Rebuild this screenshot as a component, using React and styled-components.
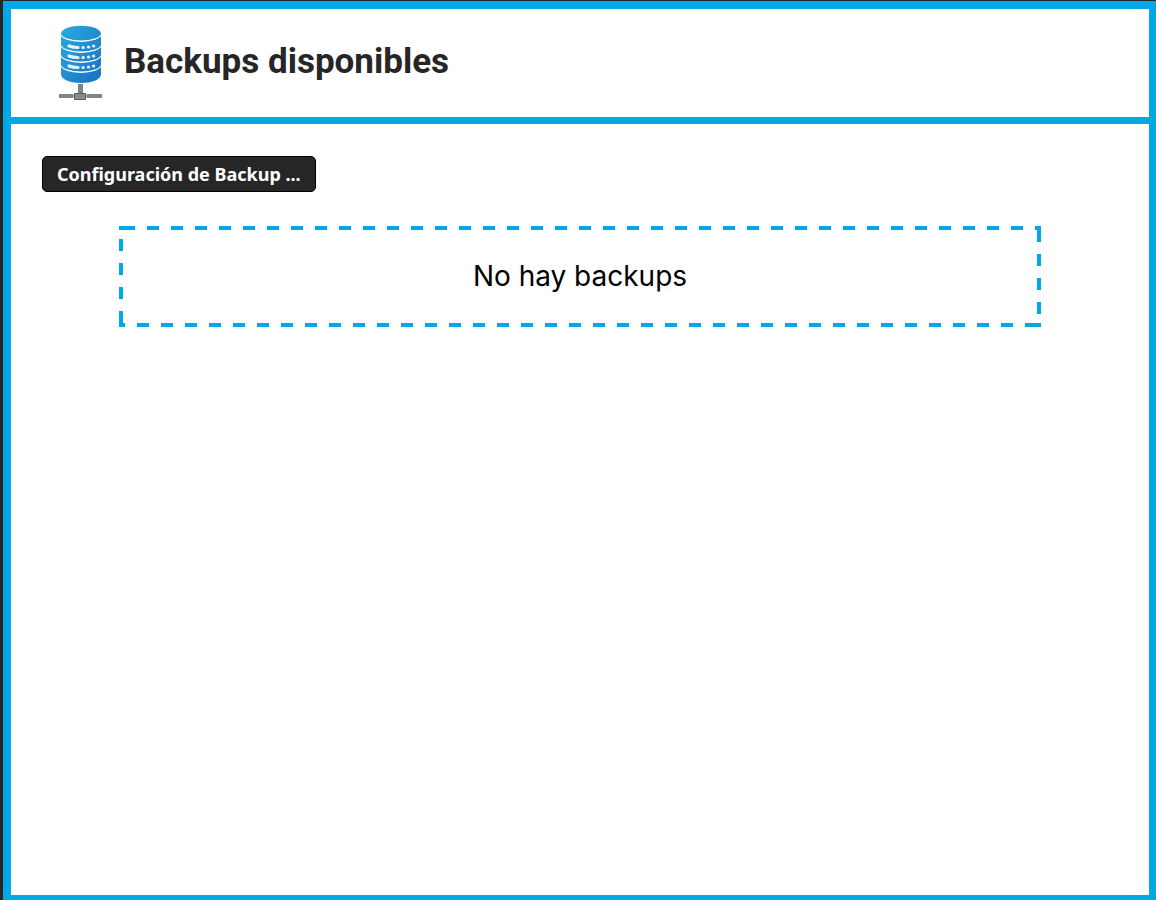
import React from 'react';
import styled, { createGlobalStyle, ThemeProvider } from 'styled-components';

const theme = { accent: '#00a8e6', dark: '#262626' };

const GlobalStyle = createGlobalStyle`
  *, *::before, *::after { box-sizing: border-box; }
  body { margin: 0; background: ${theme.dark}; }
`;

const Page = styled.div`
  min-height: 100vh;
  padding: 1px 0 0 3px;
  display: flex;
`;

const Frame = styled.div`
  flex: 1;
  display: flex;
  flex-direction: column;
  background: #fff;
  border: solid ${(p) => p.theme.accent};
  border-width: 8px 7px 5px 8px;
`;

const Header = styled.header`
  display: flex;
  align-items: center;
  gap: 19px;
  padding: 14px 46px;
  border-bottom: 7px solid ${(p) => p.theme.accent};
`;

const Logo = styled.svg`
  display: block;
  width: 48px;
  height: 80px;
`;

const Title = styled.h1`
  margin: 0;
  padding-bottom: 2px;
  font: 700 35px/48px Roboto, sans-serif;
  color: ${(p) => p.theme.dark};
`;

const Toolbar = styled.div`
  display: flex;
  padding: 32px 31px 0;
`;

const Button = styled.button`
  height: 36px;
  padding: 0 14px;
  border: 1px solid #000;
  border-radius: 5px;
  background: ${(p) => p.theme.dark};
  color: #fff;
  font: 700 18px/24px 'Noto Sans', sans-serif;
  cursor: pointer;
`;

const corner = (color) => `linear-gradient(${color}, ${color})`;
const dashes = (direction, color) =>
  `repeating-linear-gradient(to ${direction}, transparent 0 4px, ${color} 4px 16px, transparent 16px 24px)`;

/* 12px dashes running clockwise from each corner, like a marching-ants outline */
const EmptyBox = styled.div`
  margin: 34px 108px;
  padding: 30px 24px 31px;
  text-align: center;
  color: #000;
  font: 400 28px/40px Inter, sans-serif;
  background-repeat: no-repeat;
  background-image:
    ${(p) => corner(p.theme.accent)},
    ${(p) => corner(p.theme.accent)},
    ${(p) => corner(p.theme.accent)},
    ${(p) => corner(p.theme.accent)},
    ${(p) => dashes('right', p.theme.accent)},
    ${(p) => dashes('bottom', p.theme.accent)},
    ${(p) => dashes('left', p.theme.accent)},
    ${(p) => dashes('top', p.theme.accent)};
  background-position: left top, right top, right bottom, left bottom, top, right, bottom, left;
  background-size: 4px 4px, 4px 4px, 4px 4px, 4px 4px, 100% 4px, 4px 100%, 100% 4px, 4px 100%;
`;

function DatabaseLogo() {
  return (
    <Logo viewBox="0 0 48 80" aria-hidden="true">
      <defs>
        <linearGradient id="disk" x1="0" y1="0" x2="1" y2="1">
          <stop offset="0" stopColor="#29abe2" />
          <stop offset="1" stopColor="#1b6fc0" />
        </linearGradient>
      </defs>
      <path d="M4 11C4 0 44 0 44 11V51C44 63 4 63 4 51Z" fill="url(#disk)" />
      <g fill="none" stroke="#fff" strokeWidth="1.3">
        <path d="M3 10C5 21 43 21 45 10" />
        <path d="M3 21C5 32 43 32 45 21" />
        <path d="M3 31C5 42 43 42 45 31" />
        <path d="M3 41C5 52 43 52 45 41" />
      </g>
      <g fill="none" stroke="#e4f5ff" strokeWidth="3.2" strokeLinecap="round">
        {[24, 34, 44].map((y) => (
          <path key={y} d={`M12 ${y - 1}Q16 ${y + 0.5} 21 ${y + 0.5}M26 ${y + 0.5}h.2M31.5 ${y}h.2M36.5 ${y - 1}h.2`} />
        ))}
      </g>
      <path d="M21 61h5v9h-5zM2 71h14v4H2zM30 71h15v4H30z" fill="#7d8587" />
      <path d="M17.5 70.5h11v6h-11z" fill="#858c8e" stroke="#555c5e" />
      <path d="M16 73h1M29 73h1" stroke="#a8adae" strokeWidth="3" />
    </Logo>
  );
}

export default function App() {
  return (
    <ThemeProvider theme={theme}>
      <GlobalStyle />
      <Page>
        <Frame>
          <Header>
            <DatabaseLogo />
            <Title>Backups disponibles</Title>
          </Header>
          <main>
            <Toolbar>
              <Button type="button">Configuración de Backup ...</Button>
            </Toolbar>
            <EmptyBox>No hay backups</EmptyBox>
          </main>
        </Frame>
      </Page>
    </ThemeProvider>
  );
}
